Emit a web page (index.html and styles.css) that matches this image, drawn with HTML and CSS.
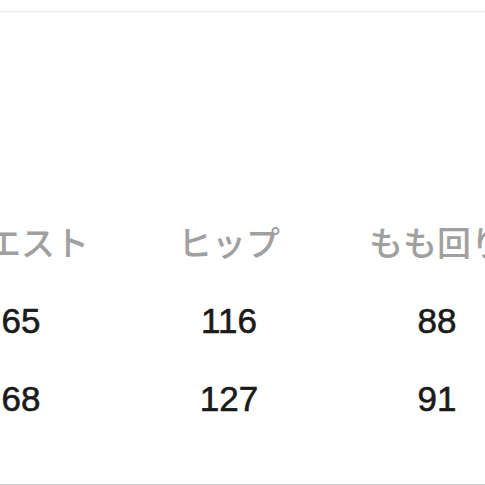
FILE: index.html
```html
<!DOCTYPE html>
<html lang="ja">
<head>
<meta charset="utf-8">
<link rel="stylesheet" href="styles.css">
</head>
<body>
<div class="sheet">
  <div class="size-table">
    <div class="cell head">ウエスト</div>
    <div class="cell head">ヒップ</div>
    <div class="cell head">もも回り</div>
    <div class="cell num">65</div>
    <div class="cell num">116</div>
    <div class="cell num">88</div>
    <div class="cell num">68</div>
    <div class="cell num">127</div>
    <div class="cell num">91</div>
  </div>
</div>
</body>
</html>
```
FILE: styles.css
```css
html, body {
  margin: 0;
  padding: 0;
  background: #ffffff;
  overflow: hidden;
}
body {
  width: 485px;
  height: 485px;
}
.sheet {
  margin-top: 11px;
  height: 474px;
  box-sizing: border-box;
  border-top: 1px solid #ececec;
  border-bottom: 1px solid #cdcdcd;
  box-shadow: inset 0 2px 2px -1px #f6f6f6;
  padding-top: 190px;
  overflow: hidden;
}
.size-table {
  margin-left: -83px;
  display: grid;
  grid-template-columns: repeat(3, 208px);
  grid-template-rows: 80px 78px 78px;
  width: 624px;
}
.cell {
  display: flex;
  align-items: center;
  justify-content: center;
  white-space: nowrap;
}
.head {
  font-family: "Noto Sans CJK JP", "Noto Sans", sans-serif;
  font-size: 34px;
  font-weight: 500;
  color: #a0a0a0;
  line-height: 78px;
}
.num {
  font-family: "Liberation Sans", Arial, sans-serif;
  font-size: 35px;
  color: #1a1a1a;
  line-height: 78px;
  -webkit-text-stroke: 0.6px #1a1a1a;
}
```
